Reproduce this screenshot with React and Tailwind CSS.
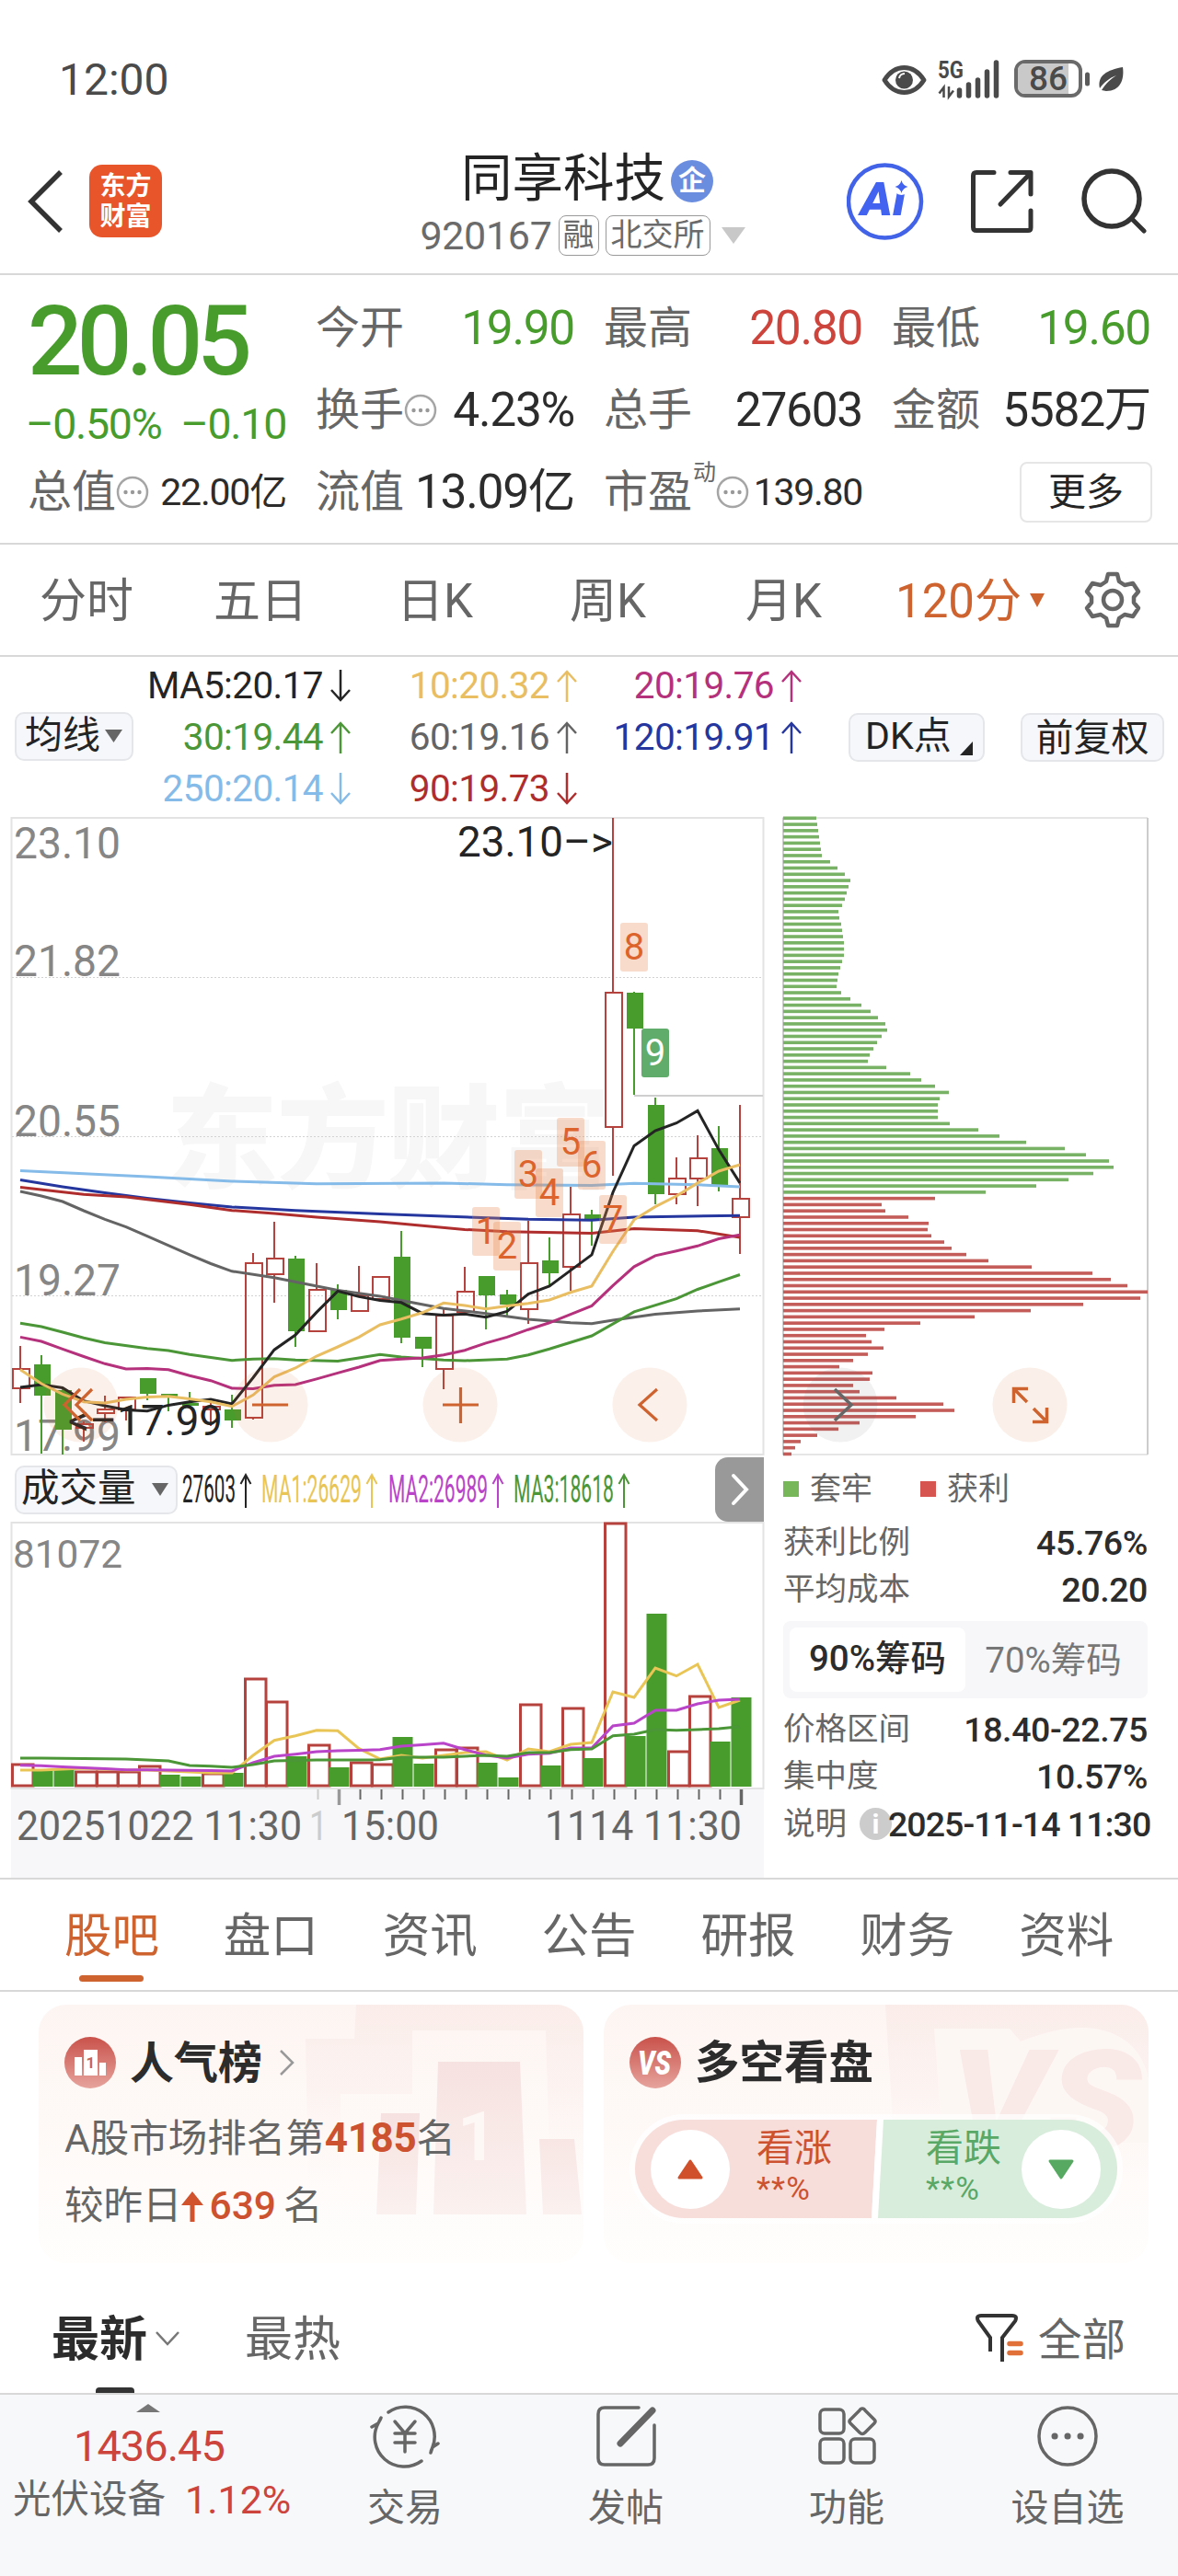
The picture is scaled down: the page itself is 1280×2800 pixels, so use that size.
import { clsx } from 'clsx'

const FONT = "font-[Roboto,'Noto_Sans_CJK_SC',sans-serif]"

const UP = '#b5423c'
const DOWN = '#479c2c'
const ACCENT = '#cf632f'

// candle centres are 23px apart
const cx = i => 22 + i * 23

// [up, high, low, bodyTop, bodyBottom]
const CANDLES = [
  [1, 1463, 1525, 1488, 1509], [0, 1473, 1580, 1483, 1517], [0, 1509, 1581, 1511, 1554], [1, 1545, 1567, 1548, 1552],
  [1, 1517, 1546, 1532, 1536], [1, 1519, 1544, 1519, 1532], [0, 1498, 1522, 1498, 1515], [0, 1515, 1534, 1515, 1518],
  [0, 1513, 1531, 1525, 1528], [1, 1523, 1550, 1529, 1532], [0, 1516, 1552, 1532, 1544], [1, 1362, 1543, 1373, 1541],
  [1, 1328, 1416, 1368, 1385], [0, 1365, 1464, 1368, 1447], [1, 1373, 1448, 1402, 1447], [0, 1396, 1434, 1402, 1424],
  [1, 1376, 1425, 1408, 1425], [1, 1388, 1412, 1388, 1412], [0, 1338, 1460, 1366, 1454], [0, 1453, 1486, 1453, 1466],
  [1, 1422, 1510, 1430, 1488], [1, 1377, 1426, 1404, 1426], [0, 1387, 1445, 1387, 1408], [0, 1402, 1430, 1407, 1418],
  [1, 1327, 1439, 1373, 1423], [0, 1345, 1398, 1370, 1384], [1, 1290, 1403, 1320, 1377], [0, 1315, 1354, 1320, 1325],
  [1, 889, 1278, 1079, 1225], [0, 1078, 1190, 1079, 1118], [0, 1193, 1309, 1201, 1298], [1, 1258, 1309, 1281, 1298],
  [1, 1234, 1311, 1259, 1281], [0, 1224, 1295, 1248, 1288], [1, 1201, 1363, 1303, 1323],
]

const full = ys => ys.map((y, i) => `${cx(i)},${y}`).join(' ')

const MA5 = full([1508, 1505, 1508.5, 1522.7, 1528, 1532.4, 1533.8, 1527.4, 1523.7, 1521, 1526, 1497.5, 1467.2, 1451, 1426.4, 1403.4, 1409.4, 1413.5, 1415.8, 1427.7, 1429.6, 1428.2, 1431.8, 1425.4, 1406.6, 1397.9, 1380.9, 1363.9, 1296, 1245.5, 1229, 1220.7, 1207.4, 1249.6, 1285.9])
const MA10 = full([1488.8, 1504, 1515.4, 1523.7, 1525, 1521, 1518.6, 1517.7, 1520.5, 1523.7, 1528.7, 1516.3, 1496.6, 1487, 1474, 1464, 1453.4, 1440, 1433.7, 1426.8, 1416.3, 1419, 1422.7, 1419.5, 1416.7, 1413, 1404.8, 1397.9, 1360.2, 1325.8, 1311.6, 1300, 1285.9, 1273, 1266])
const MA20 = full([1453.4, 1458, 1466.3, 1474.5, 1482.3, 1487.9, 1487.4, 1488.8, 1495.2, 1500.7, 1509, 1509.4, 1505.8, 1504.9, 1498.9, 1492.4, 1486, 1478.7, 1477.3, 1475.9, 1472.7, 1467.7, 1459.9, 1453.4, 1445.2, 1437.8, 1428.6, 1419.4, 1397.4, 1376.8, 1364.8, 1359.8, 1354.3, 1346.5, 1342.3])

const LINES = [
  { color: '#85bbe8', points: '22,1272.5 160,1279 252,1284 344,1286.8 482,1285.9 551,1287.7 643,1288.6 689,1286.3 758,1287.7 804,1290' },
  { color: '#646464', points: '22,1295 45,1300 68,1306 91,1316 114,1325.3 137,1333.6 160,1343.7 206,1363.9 229,1373.5 252,1381.8 298,1388.7 367,1402.5 413,1408.9 436,1413.5 482,1422.2 528,1427.7 574,1434 620,1437.8 643,1438.7 666,1435 712,1428.6 758,1425 804,1422.7' },
  { color: '#25379f', points: '22,1282.6 68,1290 114,1296.4 160,1302.4 206,1307.4 252,1312 321,1315.7 413,1319.4 482,1322 574,1325.3 643,1326.2 689,1323 804,1321.2' },
  { color: '#af2d2d', points: '22,1290.4 91,1298.2 137,1301 206,1309.3 252,1315.7 298,1318.9 344,1323 413,1328 505,1336.4 551,1338.7 643,1340.5 689,1335.4 758,1337.7 804,1345' },
  { color: '#4b9637', points: '22,1438.3 45,1442 68,1448 91,1454.3 114,1459.4 160,1465.8 183,1468 206,1472.2 229,1475.5 252,1478.7 275,1477.3 298,1476.8 321,1478.2 367,1479.6 390,1475.9 413,1472.2 436,1475 482,1478.2 505,1479 551,1477.3 574,1472.7 597,1466.3 643,1452 689,1425.9 735,1411.6 758,1401.5 781,1393.3 804,1385.5' },
  { color: '#b5317c', points: MA20 },
  { color: '#242424', points: MA5 },
  { color: '#e9bd62', points: MA10 },
]

const SIGNS = [
  { n: 1, x: 513, y: 1312 }, { n: 2, x: 536, y: 1328 }, { n: 3, x: 559, y: 1250 }, { n: 4, x: 582, y: 1270 },
  { n: 5, x: 605, y: 1215 }, { n: 6, x: 628, y: 1240 }, { n: 7, x: 651, y: 1299 }, { n: 8, x: 674, y: 1003 },
]

const AXIS = [['23.10', 933], ['21.82', 1061], ['20.55', 1235], ['19.27', 1408], ['17.99', 1577]]

// [up, top]
const VOLUMES = [
  [1, 1918], [0, 1924], [0, 1924], [1, 1926], [1, 1926], [1, 1926], [1, 1920], [0, 1929], [0, 1931], [1, 1928], [0, 1927],
  [1, 1825], [1, 1850], [0, 1909], [1, 1897], [0, 1921], [1, 1916], [1, 1918], [0, 1888], [0, 1917], [1, 1902], [1, 1900],
  [0, 1916], [0, 1932], [1, 1853], [0, 1919], [1, 1857], [0, 1911], [1, 1656], [0, 1887], [0, 1754], [1, 1904], [1, 1844],
  [0, 1893], [0, 1845],
]

const VOL_LINES = [
  { color: '#e9c556', points: full([1924, 1924, 1923, 1922, 1923, 1924, 1924, 1925, 1926, 1927, 1927, 1908, 1891.7, 1886.7, 1880.7, 1881.3, 1900.7, 1912, 1908, 1911, 1908, 1905, 1904, 1913, 1901, 1904, 1896, 1894, 1839, 1845, 1813, 1821.7, 1809, 1856, 1848]) },
  { color: '#b944c9', points: full([1918.7, 1919.3, 1920.5, 1921.5, 1922.5, 1923.7, 1923.7, 1924, 1924.3, 1924.6, 1925, 1916, 1909, 1906.7, 1904, 1903, 1902.5, 1901.7, 1898, 1896.5, 1894.7, 1901.7, 1907.7, 1911, 1906.7, 1905.7, 1900, 1900, 1876, 1873, 1859, 1859, 1852, 1848, 1847]) },
  { color: '#4b9637', points: full([1911, 1911, 1911.3, 1911.6, 1911.8, 1912, 1913, 1914, 1919, 1919.7, 1921, 1918, 1914, 1913.5, 1913, 1913, 1913, 1912.7, 1910, 1910, 1910, 1909, 1908, 1909, 1905, 1905, 1901.7, 1901, 1886.7, 1885, 1880, 1880.7, 1880, 1879, 1876.7]) },
]

const TRAPPED = [36, 37, 38, 39, 40, 41, 42, 51, 59, 67, 73, 71, 69, 67, 64, 60, 61, 63, 64, 65, 66, 66, 66, 64, 62, 60, 59, 58, 63, 73, 85, 95, 103, 111, 113, 107, 102, 98, 94, 92, 112, 138, 150, 165, 180, 170, 168, 168, 168, 181, 212, 235, 264, 306, 329, 354, 359, 337, 310, 275, 220]
const PROFIT = [165, 107, 111, 136, 158, 157, 161, 175, 183, 199, 223, 270, 336, 356, 374, 396, 388, 326, 269, 208, 149, 110, 90, 96, 109, 92, 76, 61, 97, 94, 76, 83, 123, 174, 186, 144, 83, 60, 37, 19, 13, 9]

const VOL_LEGEND = [
  { text: '27603', x: 198, w: 58, color: '#242424' },
  { text: 'MA1:26629', x: 284, w: 109, color: '#e9c556' },
  { text: 'MA2:26989', x: 422, w: 108, color: '#b944c9' },
  { text: 'MA3:18618', x: 558, w: 109, color: '#4b9637' },
]

function T({ x, y, w, size, fill, children, ...rest }) {
  return (
    <text x={x} y={y} textLength={w} lengthAdjust="spacingAndGlyphs" fontSize={size} fill={fill} {...rest}>{children}</text>
  )
}

function StatusBar() {
  return (
    <div className="h-[150px] flex justify-between pl-[64px] pr-[58px] text-[#4a4a4a]">
      <span className="mt-[63px] text-[48px] leading-[48px]">12:00</span>
      <svg className="mt-[60px]" width="264" height="50" viewBox="958 60 264 50" fill="none">
        <path d="M961 87C968 76 975 73.500 982.500 73.500s14.500 2.500 21.500 13.500c-7 11-14 13.500-21.500 13.500s-14.500-2.500-21.500-13.500z" stroke="#4a4a4a" strokeWidth="5" strokeLinejoin="round" />
        <circle cx="982.500" cy="87" r="9.500" fill="#4a4a4a" />
        <path d="M977 85a6 6 0 0 1 6-5" stroke="#fff" strokeWidth="2" />
        <T x="1019" y="85" w="28" size="26" fill="#4a4a4a" fontWeight="700">5G</T>
        <path d="M1025.500 106V95l-5 6.500M1031 94v11l5-6.500" stroke="#4a4a4a" strokeWidth="2.500" />
        <path d="M1042.500 98v6M1052.500 92v12M1062.500 87v17M1072.500 78v26M1082.500 68v36" stroke="#4a4a4a" strokeWidth="5.500" strokeLinecap="round" />
        <rect x="1104" y="67" width="70" height="37" rx="10" stroke="#6a6a6a" strokeWidth="4" />
        <path d="M1113 69h48v33h-48a7 7 0 0 1-7-7v-19a7 7 0 0 1 7-7z" fill="#c9c9c9" />
        <T x="1118" y="98" w="42" size="36" fill="#4a4a4a" fontWeight="500">86</T>
        <path d="M1181.500 81v10" stroke="#5a5a5a" strokeWidth="5" strokeLinecap="round" />
        <path d="M1220 73c2 14-3 26-18 26l-5-1c5-8 10-12 16-16-8 3-14 8-18 14-3-14 8-20 25-23z" fill="#4a4a4a" />
      </svg>
    </div>
  )
}

function Header() {
  return (
    <header className="h-[149px] flex items-center border-b-2 border-[#d8d8d8] pl-[28px] pr-[34px] pb-[10px]">
      <svg width="44" height="72" viewBox="0 0 44 72" fill="none" stroke="#333" strokeWidth="5.500">
        <path d="M38 4L6 36l32 32" />
      </svg>
      <div className="ml-[25px] size-[79px] rounded-[14px] bg-[#e9552b] text-white font-bold text-[28px] leading-[33px] text-center pt-[7px]">
        东方<br />财富
      </div>
      <div className="flex-1 flex flex-col items-center pl-[170px] pt-[6px]">
        <div className="flex items-center text-[55.500px] leading-[60px] text-[#242424] ml-[10px]">
          同享科技
          <span className="ml-[6px] mt-[3px] size-[46px] rounded-full bg-[#6a8de0] text-white text-[30px] leading-[43px] font-bold text-center">企</span>
        </div>
        <div className="flex items-center mt-[9px] text-[#6b6b6b]">
          <span className="text-[43px] leading-[44px] tracking-[-0.300px]">920167</span>
          <span className="ml-[7px] border-[1.500px] border-[#999] rounded-[8px] w-[44px] h-[44px] text-center text-[34px] leading-[40px]">融</span>
          <span className="ml-[7px] border-[1.500px] border-[#999] rounded-[8px] w-[114px] h-[44px] text-center text-[34px] leading-[40px]">北交所</span>
          <svg className="ml-[12px]" width="26" height="18"><path d="M0 0h26L13 18z" fill="#c8c8c8" /></svg>
        </div>
      </div>
      <svg width="326" height="84" viewBox="920 177 326 84" fill="none">
        <circle cx="961.500" cy="219" r="39.500" stroke="#4262e8" strokeWidth="4.500" />
        <text x="935" y="234" fontSize="49" fontWeight="900" fontStyle="italic" textLength="49" lengthAdjust="spacingAndGlyphs" fill="#4262f0">Ai</text>
        <circle cx="979.500" cy="203" r="9" fill="#fff" />
        <path d="M979.500 196q1.500 5.500 7 7q-5.500 1.500-7 7q-1.500-5.500-7-7q5.500-1.500 7-7z" fill="#4262f0" />
        <path d="M1080 187.500H1061q-3.500 0-3.500 3.500V247q0 3.500 3.500 3.500h56q3 0 3-3V229M1098 187.500h22V211M1119 189l-32 33" stroke="#333" strokeWidth="5" strokeLinecap="round" strokeLinejoin="round" />
        <circle cx="1208" cy="216" r="30" stroke="#333" strokeWidth="5.500" />
        <path d="M1230 238l13 13" stroke="#333" strokeWidth="5" strokeLinecap="round" />
      </svg>
    </header>
  )
}

function Dots() {
  return (
    <svg className="shrink-0" width="36" height="36" viewBox="0 0 36 36">
      <circle cx="18" cy="18" r="16" fill="none" stroke="#a5a5a5" strokeWidth="2.500" />
      <circle cx="10.500" cy="18" r="2.200" fill="#999" />
      <circle cx="18" cy="18" r="2.200" fill="#999" />
      <circle cx="25.500" cy="18" r="2.200" fill="#999" />
    </svg>
  )
}

function Stat({ label, value, tone = 'text-[#2c2c2c]', size = 'text-[51.500px] tracking-[-1.300px]', dots, sup }) {
  return (
    <div className="h-[88px] flex items-center justify-between whitespace-nowrap">
      <span className="flex items-center text-[48px] leading-[88px] text-[#666]">
        {label}
        {sup && <sup className="text-[25px] leading-none -top-[22px] ml-px">{sup}</sup>}
        {dots && <Dots />}
      </span>
      <span className={clsx('leading-[88px]', size, tone)}>{value}</span>
    </div>
  )
}

function Quote() {
  return (
    <section className="h-[293px] border-b-2 border-[#d8d8d8] pt-[14px] pl-[30px]">
      <div className="grid grid-cols-[281px_281px_281px_281px] gap-x-8">
        <div className="row-span-2 text-[#479c2c]">
          <div className="text-[105px] leading-[118px] tracking-[-6px] font-medium">20.05</div>
          <div className="flex justify-between text-[46.500px] leading-[60px] tracking-[-1.300px] -ml-[2px]">
            <span>–0.50%</span>
            <span>–0.10</span>
          </div>
        </div>
        <Stat label="今开" value="19.90" tone="text-[#479c2c]" />
        <Stat label="最高" value="20.80" tone="text-[#cc443c]" />
        <Stat label="最低" value="19.60" tone="text-[#479c2c]" />
        <Stat label="换手" value="4.23%" dots />
        <Stat label="总手" value="27603" />
        <Stat label="金额" value="5582万" />
        <Stat label="总值" value="22.00亿" dots size="text-[41px] tracking-[-1.200px]" />
        <Stat label="流值" value="13.09亿" />
        <Stat label="市盈" value="139.80" sup="动" dots size="text-[41px] tracking-[-1.300px]" />
        <div className="flex items-center justify-end">
          <button className="w-[144px] h-[66px] -mr-[2px] border-2 border-[#e6e6e6] rounded-[8px] text-[41px] leading-[55px] text-[#242424]">更多</button>
        </div>
      </div>
    </section>
  )
}

function PeriodTabs() {
  return (
    <nav className="h-[122px] border-b-2 border-[#d8d8d8] flex items-center pl-[43px] pr-[40px] text-[51px] leading-[118px] text-[#666] whitespace-nowrap">
      <span className="w-[189px] pt-[4px]">分时</span>
      <span className="w-[199px] pt-[4px]">五日</span>
      <span className="w-[188px] pt-[4px]">日K</span>
      <span className="w-[191px] pt-[4px]">周K</span>
      <span className="w-[163px] pt-[4px]">月K</span>
      <span className="pt-[4px] text-[#cf632f]">120分</span>
      <svg className="ml-[9px]" width="16" height="15"><path d="M0 0h16L8 15z" fill={ACCENT} /></svg>
      <svg className="ml-auto" width="62" height="62" viewBox="0 0 62 62" fill="none" stroke="#666" strokeWidth="4.500" strokeLinejoin="round">
        <path d="M26 3h10l2 8l6 4l9-2l6 9l-5 6v6l5 6l-6 9l-9-2l-6 4l-2 8H26l-2-8l-6-4l-9 2l-6-9l5-6v-6l-5-6l6-9l9 2l6-4z" />
        <circle cx="31" cy="31" r="10" />
      </svg>
    </nav>
  )
}

function Arrow({ up, width = 22 }) {
  return (
    <svg width={width} height="35" viewBox={`0 0 ${width} 35`} fill="none" stroke="currentColor" strokeWidth="2.500"
      className={clsx(!up && 'rotate-180')}>
      <path d={`M${width / 2} 35V2M1 13L${width / 2} 2L${width - 1} 13`} />
    </svg>
  )
}

function Ma({ text, up, tone }) {
  return (
    <span className={clsx('flex items-center justify-end gap-[8px] text-[40.500px] leading-[56px] tracking-[-0.600px]', tone)}>
      {text}<Arrow up={up} />
    </span>
  )
}

function MaBar() {
  const chip = 'h-[53px] border-2 border-[#e4e6ea] bg-[#f6f7fa] rounded-[10px] text-[41px] leading-[46px] text-[#242424] whitespace-nowrap'
  return (
    <div className="h-[173px] flex items-start pt-[3px] pl-[16px] pr-[15px]">
      <button className={clsx(chip, 'w-[129px] mt-[57px] pl-[9px] flex')}>
        均线<svg className="mt-[17px] ml-[5px]" width="19" height="14"><path d="M0 0h19L9.500 14z" fill="#666" /></svg>
      </button>
      <div className="w-[726px] grid grid-cols-[236px_246px_244px]">
        <Ma text="MA5:20.17" tone="text-[#242424]" />
        <Ma text="10:20.32" up tone="text-[#e9bd62]" />
        <Ma text="20:19.76" up tone="text-[#b5317c]" />
        <Ma text="30:19.44" up tone="text-[#4b9637]" />
        <Ma text="60:19.16" up tone="text-[#646464]" />
        <Ma text="120:19.91" up tone="text-[#25379f]" />
        <Ma text="250:20.14" tone="text-[#85bbe8]" />
        <Ma text="90:19.73" tone="text-[#af2d2d]" />
      </div>
      <button className={clsx(chip, 'w-[148px] mt-[58px] ml-[51px] pl-[16px] flex')}>
        DK点<svg className="mt-[29px] ml-[9px]" width="14" height="15"><path d="M14 0v15H0z" fill="#242424" /></svg>
      </button>
      <button className={clsx(chip, 'w-[156px] mt-[58px] ml-auto')}>前复权</button>
    </div>
  )
}

function PriceChart() {
  return (
    <svg className="block" width="838" height="697" viewBox="0 887 838 697" fill="none">
      <text x="180" y="1281" fontSize="122" fontWeight="900" textLength="484" fill="#f7f7f7">东方财富</text>
      <rect x="12.500" y="889" width="817" height="692" stroke="#e3e3e3" strokeWidth="2" />
      <path d="M13 1062.500h816M13 1235.500h816M13 1408.500h816" stroke="#d2d2d2" strokeDasharray="2 2" />
      <path d="M689 1191h140" stroke="#cfcfcf" strokeWidth="2" />
      {AXIS.map(([t, y]) => <T key={t} x="15" y={y} w="116" size="48" fill="#868686">{t}</T>)}
      {CANDLES.map(([up, hi, lo, t, b], i) => up ? (
        <g key={i} stroke={UP} strokeWidth="2">
          <path d={`M${cx(i)} ${hi}V${t}M${cx(i)} ${b}V${lo}`} />
          <rect x={cx(i) - 8} y={t} width="18" height={b - t} />
        </g>
      ) : (
        <g key={i} fill={DOWN}>
          <rect x={cx(i) - 1} y={hi} width="2" height={lo - hi} />
          <rect x={cx(i) - 8} y={t} width="18" height={b - t} />
        </g>
      ))}
      {LINES.map(l => <polyline key={l.color} points={l.points} stroke={l.color} strokeWidth="3" />)}
      {SIGNS.map(s => (
        <g key={s.n}>
          <rect x={s.x} y={s.y} width="30" height="53" rx="3" fill="#e88850" fillOpacity="0.300" />
          <text x={s.x + 15} y={s.y + 40} fontSize="40" textAnchor="middle" fill="#dd632c">{s.n}</text>
        </g>
      ))}
      <rect x="697" y="1118" width="30" height="53" rx="3" fill="#5fac6b" />
      <text x="712" y="1158" fontSize="40" textAnchor="middle" fill="#fff">9</text>
      <T x="497" y="931" w="169" size="46" fill="#242424">23.10–&gt;</T>
      <T x="74" y="1560" w="168" size="46" fill="#242424">&lt;–17.99</T>
      {[88, 294, 500, 706].map(x => <circle key={x} cx={x} cy="1527" r="40.500" fill="#d9702f" fillOpacity="0.100" />)}
      <g stroke={ACCENT} strokeWidth="3.200">
        <path d="M87 1510l-17 17l17 17M100 1510l-17 17l17 17" />
        <path d="M274 1527h39M481 1527h39M500.500 1508v39" />
        <path d="M714 1510l-19 17l19 17" />
      </g>
    </svg>
  )
}

function VolumeChart() {
  return (
    <svg className="block" width="838" height="388" viewBox="0 1653 838 388" fill="none">
      <rect x="12.500" y="1655" width="817" height="289" stroke="#e3e3e3" strokeWidth="2" />
      <rect x="12" y="1945" width="818" height="96" fill="#f7f7fa" />
      <T x="14" y="1704" w="119" size="43" fill="#868686">81072</T>
      {VOLUMES.map(([up, top], i) => up
        ? <rect key={i} x={cx(i) - 8.500} y={top} width="22.500" height={1941 - top} stroke={UP} strokeWidth="3" />
        : <rect key={i} x={cx(i) - 9.500} y={top} width="22" height={1942 - top} fill={DOWN} />)}
      {VOL_LINES.map(l => <polyline key={l.color} points={l.points} stroke={l.color} strokeWidth="3" />)}
      {VOLUMES.map((_, i) => i > 13 && (
        <path key={i} d={`M${cx(i) + 1.500} 1945v${i === 15 || i === 34 ? 17 : 11}`}
          stroke={i === 14 ? '#ccc' : i === 15 ? '#999' : '#666'} strokeWidth={i === 15 || i === 34 ? 3.500 : 2} />
      ))}
      <T x="18" y="2000" w="310" size="44" fill="#666">20251022 11:30</T>
      <T x="336" y="2000" w="20" size="44" fill="#ccc">1</T>
      <T x="371" y="2000" w="106" size="44" fill="#666">15:00</T>
      <T x="592" y="2000" w="214" size="44" fill="#666">1114 11:30</T>
    </svg>
  )
}

function VolumeBar() {
  return (
    <div className="h-[69px] w-[838px] flex items-center pl-[16px]">
      <button className="w-[177px] h-[53px] mt-[2px] border-2 border-[#e4e6ea] bg-[#f6f7fa] rounded-[10px] pl-[5px] flex text-[41.500px] leading-[46px] text-[#242424]">
        成交量<svg className="mt-[17px] ml-[17px]" width="18" height="14"><path d="M0 0h18L9 14z" fill="#666" /></svg>
      </button>
      <svg width="502" height="50" viewBox="193 1593 502 50" fill="none">
        {VOL_LEGEND.map(v => (
          <g key={v.text}>
            <T x={v.x} y="1632" w={v.w} size="42" fill={v.color}>{v.text}</T>
            <path d={`M${v.x + v.w + 11} 1638V1602M${v.x + v.w + 5.500} 1612l5.500-10l5.500 10`} stroke={v.color} strokeWidth="2" />
          </g>
        ))}
      </svg>
      <button className="ml-auto mr-[8px] w-[53px] h-[70px] rounded-l-[14px] bg-[#999] flex items-center justify-center">
        <svg width="20" height="40" viewBox="0 0 20 40" fill="none" stroke="#fff" strokeWidth="4" strokeLinecap="round"><path d="M3 5l14 15L3 35" /></svg>
      </button>
    </div>
  )
}

function ChipChart() {
  const bars = [...TRAPPED.map(w => [w, '#78b264']), ...PROFIT.map(w => [w, '#c45d59'])]
  return (
    <svg className="block" width="442" height="697" viewBox="838 887 442 697" fill="none">
      <path d="M850 889H1247M850 1581H1247" stroke="#ccc" strokeWidth="1" />
      <path d="M851 889V1581M1247 889V1581" stroke="#ccc" strokeWidth="2" />
      {bars.map(([w, c], i) => <rect key={i} x="851" y={887.500 + i * 6.776} width={w} height="3.600" fill={c} />)}
      <circle cx="913" cy="1527" r="40.500" fill="#666" fillOpacity="0.090" />
      <path d="M907 1510l18 17l-18 17" stroke="#666" strokeWidth="3.500" />
      <circle cx="1119" cy="1527" r="40.500" fill="#fbf0e9" />
      <path d="M1117 1509.500h-15.500V1525M1103 1511l13 13M1122 1545.500h15.500V1530M1136 1544l-13-13" stroke={ACCENT} strokeWidth="3.500" />
    </svg>
  )
}

function ChipRow({ label, value, info, tight }) {
  return (
    <div className="h-[51.500px] flex items-center justify-between whitespace-nowrap">
      <span className="flex items-center text-[34.500px] text-[#666] shrink-0">
        {label}
        {info && <i className="ml-[14px] size-[35px] rounded-full bg-[#ccc] text-white not-italic font-bold text-[30px] leading-[35px] text-center">i</i>}
      </span>
      <span className={clsx('text-[37.500px] font-medium text-[#2c2c2c]', tight ? 'tracking-[-0.950px] -ml-[4px]' : 'tracking-[-0.400px]')}>{value}</span>
    </div>
  )
}

function ChipPanel() {
  return (
    <div className="pl-[13px] pr-[33px]">
      <div className="h-[67px] pt-px flex items-center text-[34px] text-[#666]">
        <i className="size-[17px] bg-[#78b65a] mr-[12px]" />套牢
        <i className="size-[17px] bg-[#d65550] mr-[12px] ml-[52px]" />获利
      </div>
      <ChipRow label="获利比例" value="45.76%" />
      <ChipRow label="平均成本" value="20.20" />
      <div className="mt-[8px] mb-[8px] h-[84px] rounded-[8px] bg-[#f7f7fa] p-[7px] flex items-center text-[38.500px] leading-[67px] whitespace-nowrap">
        <span className="w-[191px] h-[70px] rounded-[8px] bg-white font-medium text-[#2c2c2c] text-center">90%筹码</span>
        <span className="flex-1 text-center text-[#777]">70%筹码</span>
      </div>
      <ChipRow label="价格区间" value="18.40-22.75" />
      <ChipRow label="集中度" value="10.57%" />
      <ChipRow label="说明" value="2025-11-14 11:30" info tight />
    </div>
  )
}

function SectionTabs() {
  const tabs = ['股吧', '盘口', '资讯', '公告', '研报', '财务', '资料']
  return (
    <nav className="h-[124px] border-y-2 border-[#d8d8d8] flex pl-[70px] text-[51.500px] leading-[124px] text-[#666]">
      {tabs.map((t, i) => (
        <span key={t} className={clsx('relative h-[120px] w-[173px]', i === 0 && 'text-[#cf632f]')}>
          {t}
          {i === 0 && <i className="absolute left-[16px] bottom-[9px] w-[70px] h-[7px] rounded-full bg-[#cf632f]" />}
        </span>
      ))}
    </nav>
  )
}

function Badge({ children }) {
  return (
    <svg width="56" height="56" viewBox="0 0 56 56">
      <defs>
        <linearGradient id="badge" x1="0" y1="0" x2="0" y2="1">
          <stop offset="0" stopColor="#c9524b" />
          <stop offset="1" stopColor="#e6a49d" />
        </linearGradient>
      </defs>
      <circle cx="28" cy="28" r="28" fill="url(#badge)" />
      {children}
    </svg>
  )
}

function RankCard() {
  return (
    <div className="relative overflow-hidden w-[592px] h-[281px] rounded-[30px] bg-linear-to-b from-[#fdf5f2] to-[#fffefd] pl-[28px]">
      <svg className="absolute right-0 top-0" width="304" height="281" viewBox="330 0 304 281">
        <defs>
          <linearGradient id="fade" x1="0" y1="0" x2="0" y2="1">
            <stop offset="0" stopColor="#f9e9e6" stopOpacity="0.700" />
            <stop offset="1" stopColor="#fbf0ee" stopOpacity="0" />
          </linearGradient>
          <linearGradient id="bar" x1="0" y1="0" x2="0" y2="1">
            <stop offset="0" stopColor="#f6e2e0" />
            <stop offset="1" stopColor="#fbf1ef" />
          </linearGradient>
        </defs>
        <path d="M387 0H634V200H598L593 28H448V97H370V200H335L332 37h53z" fill="url(#fade)" />
        <path d="M476 62h89l7 166h-101z" fill="url(#bar)" />
        <path d="M414 118h42l-4 110h-43zM586 146h38l8 82h-42z" fill="url(#bar)" />
        <text x="497" y="169" fontSize="74" fontWeight="700" fill="#fdf7f5">1</text>
      </svg>
      <div className="relative flex items-center h-[126px]">
        <Badge>
          <path d="M11 22h8v20h-8zM21 14h15v28H21zM38 28h7v14h-7z" fill="#fff" />
          <text x="28.500" y="34" fontSize="17" fontWeight="700" textAnchor="middle" fill="#c9645d">1</text>
        </Badge>
        <span className="ml-[15px] text-[48px] font-bold text-[#2c2c2c] leading-[60px] pt-[2px]">人气榜</span>
        <svg className="ml-[18px]" width="18" height="28" fill="none" stroke="#999" strokeWidth="2.500"><path d="M2 1l13 13L2 27" /></svg>
      </div>
      <div className="relative text-[42.500px] leading-[73px] text-[#666] mt-[-17px]">
        <div className="flex items-center whitespace-nowrap">
          A股市场排名第<b className="text-[#cc5230] text-[44px] tracking-[-0.300px]">4185</b>名
        </div>
        <div className="flex items-center">
          较昨日
          <svg className="ml-[-2px] mt-[2px]" width="26" height="34"><path d="M13 0l12 15H1zM10.500 13h5v20h-5z" fill="#d0532d" /></svg>
          <span className="ml-[6px] text-[#cc5230] font-medium">639</span>
          <span className="ml-[8px]">名</span>
        </div>
      </div>
    </div>
  )
}

function VoteCard() {
  return (
    <div className="relative overflow-hidden w-[592px] h-[281px] rounded-[30px] bg-linear-to-b from-[#fdf5f2] to-[#fffefd] pl-[28px]">
      <svg className="absolute right-0 top-0" width="292" height="281" viewBox="300 0 292 281">
        <path d="M306 0H592V190H318z" fill="url(#fade)" />
        <path d="M359 26h82l12 14q80-32 120 4q14 14 19 36v70H368z" fill="#fdf7f4" />
        <text x="376" y="157" fontSize="152" fontWeight="900" fontStyle="italic" textLength="208" lengthAdjust="spacingAndGlyphs" fill="#f9e9e7">VS</text>
      </svg>
      <div className="relative flex items-center h-[126px]">
        <Badge>
          <text x="27" y="41" fontSize="36" fontWeight="900" fontStyle="italic" textAnchor="middle" textLength="36" lengthAdjust="spacingAndGlyphs" fill="#fff">VS</text>
        </Badge>
        <span className="ml-[15px] text-[48.500px] font-bold text-[#2c2c2c] leading-[60px] pt-[2px]">多空看盘</span>
      </div>
      <div className="relative w-[536px] h-[119px] rounded-full border-[6px] border-white/70 mt-[-7px] overflow-hidden flex">
        <svg className="absolute inset-0" width="524" height="107">
          <path d="M0 0h263l-6 107H0z" fill="#f8dedb" />
          <path d="M263 0h7l-6 107h-7z" fill="#fff" />
          <path d="M270 0h254v107H264z" fill="#d9eddd" />
        </svg>
        <div className="relative w-[263px] flex items-center pl-[17px]">
          <span className="size-[86px] rounded-full bg-white flex items-center justify-center">
            <svg width="30" height="24"><path d="M15 3l12 18H3z" fill="#d0502b" stroke="#d0502b" strokeWidth="3" strokeLinejoin="round" /></svg>
          </span>
          <div className="ml-[29px] mt-[-5px] text-[#cc5230] text-[41px] leading-[46px]">看涨<div className="text-[35px] leading-[38px] mt-[3px] tracking-[1px]">**%</div></div>
        </div>
        <div className="relative flex-1 flex items-center justify-end pr-[18px]">
          <div className="mr-[22px] mt-[-5px] text-[#5aa866] text-[41px] leading-[46px]">看跌<div className="text-[35px] leading-[38px] mt-[3px] tracking-[1px]">**%</div></div>
          <span className="size-[86px] rounded-full bg-white flex items-center justify-center">
            <svg width="30" height="24"><path d="M15 21L3 3h24z" fill="#57a962" stroke="#57a962" strokeWidth="3" strokeLinejoin="round" /></svg>
          </span>
        </div>
      </div>
    </div>
  )
}

function FeedBar() {
  return (
    <div className="h-[141px] flex items-center pl-[56px] pr-[57px] pt-[22px] relative text-[52px] leading-[60px] text-[#666]">
      <span className="pt-[5px] font-bold text-[#2c2c2c]">最新</span>
      <svg className="ml-[9px]" width="26" height="16" fill="none" stroke="#777" strokeWidth="2.500"><path d="M1 1l12 13L25 1" /></svg>
      <span className="pt-[5px] ml-[71px]">最热</span>
      <svg className="ml-auto" width="52" height="56" viewBox="1059 2516 52 56" fill="none">
        <path d="M1075 2558v-15l-13-18q-3-6 3-6h34q6 0 3 6l-14 18v26" stroke="#333" strokeWidth="4" />
        <path d="M1096 2549.500h12M1096 2559.500h12" stroke="#e07038" strokeWidth="5.500" strokeLinecap="round" />
      </svg>
      <span className="pt-[4px] ml-[16px] text-[47.500px]">全部</span>
      <i className="absolute left-[104px] bottom-0 w-[42px] h-[6px] rounded-t-[4px] bg-[#333]" />
    </div>
  )
}

function NavItem({ label, children }) {
  return (
    <div className="w-[240px] flex flex-col items-center pt-[10px] text-[41px] leading-[60px] text-[#666]">
      <svg width="78" height="70" viewBox="-39 -35 78 70" fill="none" stroke="#666" strokeWidth="3.500" strokeLinecap="round">{children}</svg>
      <span className="mt-[13px]">{label}</span>
    </div>
  )
}

function BottomNav() {
  return (
    <footer className="h-[199px] bg-[#f7f8fa] border-t-2 border-[#d8d8d8] flex">
      <div className="w-[320px] flex flex-col pt-[10px] whitespace-nowrap text-[#cc443c]">
        <svg className="ml-[148px]" width="26" height="9"><path d="M13 0l13 9H0z" fill="#777" /></svg>
        <span className="ml-[80px] mt-[8px] text-[47px] leading-[58px] tracking-[-1px]">1436.45</span>
        <div className="flex items-center pl-[14px] leading-[58px] text-[41.500px]">
          <span className="text-[#666]">光伏设备</span>
          <span className="ml-[21px] text-[43px]">1.12%</span>
        </div>
      </div>
      <NavItem label="交易">
        <path d="M-18 -26A32 32 0 0 1 30 12l6 -4M30 12l-2 6M18 27A32 32 0 0 1 -29 -14l-7 4M-29 -14l3-6" />
        <path d="M-11 -16L0 -3L11 -16M0 -3V17M-11 -3H11M-11 7H11" />
      </NavItem>
      <NavItem label="发帖">
        <path d="M14 -31H-23q-7 0-7 7V24q0 7 7 7H24q7 0 7-7V-12" />
        <path d="M29 -28L-6 8" strokeWidth="7" />
      </NavItem>
      <NavItem label="功能">
        <rect x="-29" y="-29" width="26" height="26" rx="5" />
        <rect x="-29" y="3" width="26" height="26" rx="5" />
        <rect x="4" y="3" width="26" height="26" rx="5" />
        <path d="M17 -30q2 0 3 2l10 10q2 2 0 4l-10 10q-3 3-6 0l-10-10q-2-2 0-4l10-10q1-2 3-2z" />
      </NavItem>
      <NavItem label="设自选">
        <circle r="31" />
        <path d="M-14 0h.1M0 0h.1M14 0h.1" strokeWidth="7" />
      </NavItem>
    </footer>
  )
}

export default function App() {
  return (
    <div className={clsx('w-[1280px] h-[2800px] overflow-hidden bg-white', FONT)}>
      <StatusBar />
      <Header />
      <Quote />
      <PeriodTabs />
      <MaBar />
      <div className="flex h-[1154px]">
        <div className="w-[838px]">
          <PriceChart />
          <VolumeBar />
          <VolumeChart />
        </div>
        <div className="w-[442px]">
          <ChipChart />
          <ChipPanel />
        </div>
      </div>
      <SectionTabs />
      <div className="h-[295px] pt-[14px] pl-[42px] flex gap-[22px]">
        <RankCard />
        <VoteCard />
      </div>
      <FeedBar />
      <BottomNav />
    </div>
  )
}
